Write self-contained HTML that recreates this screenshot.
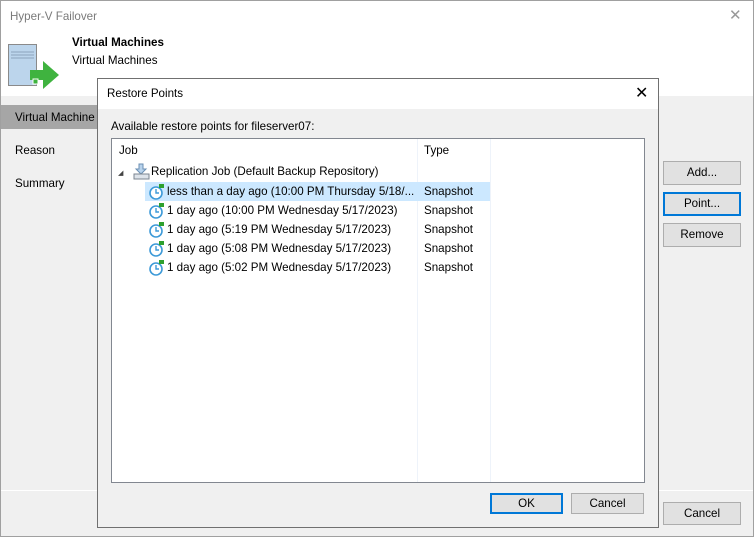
<!DOCTYPE html>
<html><head><meta charset="utf-8"><style>
*{box-sizing:border-box;margin:0;padding:0}
body{width:754px;height:537px;overflow:hidden;font-family:"Liberation Sans",sans-serif;font-size:11.6px;color:#000;background:#fff}
.win{position:absolute;left:0;top:0;width:754px;height:537px;border:1px solid #a0a0a0;background:#f0f0f0}
.abs{position:absolute}
.btn{position:absolute;background:#e1e1e1;border:1px solid #adadad;text-align:center}
.btn.def{border:2px solid #0078d7}
.row{position:absolute;left:145px;height:19px;line-height:19px;width:345px}
.row span{position:absolute;left:22px;width:252px;overflow:hidden;white-space:nowrap}
.row b{position:absolute;left:279px;font-weight:normal}
.ic{position:absolute;left:3px;top:2px}
</style></head><body>
<div class="win">
 <div class="abs" style="left:0;top:0;width:752px;height:95px;background:#fff"></div>
 <div class="abs" style="left:9px;top:9px;color:#7a7a7a">Hyper-V Failover</div>
 <div class="abs" style="left:728px;top:5px;color:#999;font-size:15px">✕</div>
 <svg class="abs" style="left:6px;top:42px" width="56" height="48">
  <rect x="1.5" y="1.5" width="28" height="41" fill="#bcd5ec" stroke="#8a8a8a"/>
  <line x1="4" y1="9" x2="27" y2="9" stroke="#8da4bc"/><line x1="4" y1="12" x2="27" y2="12" stroke="#8da4bc"/><line x1="4" y1="15" x2="27" y2="15" stroke="#8da4bc"/>
  <polygon points="23,27 36,27 36,18 52,32 36,46 36,37 23,37" fill="#3fb33f"/>
  <rect x="26" y="36" width="5" height="5" fill="#3fb33f" stroke="#fff"/>
 </svg>
 <div class="abs" style="left:71px;top:35px;font-weight:bold">Virtual Machines</div>
 <div class="abs" style="left:71px;top:53px">Virtual Machines</div>
 <div class="abs" style="left:0;top:104px;width:97px;height:24px;background:#a6a6a6"></div>
 <div class="abs" style="left:14px;top:110px">Virtual Machine</div>
 <div class="abs" style="left:14px;top:143px">Reason</div>
 <div class="abs" style="left:14px;top:176px">Summary</div>
 <div class="btn" style="left:662px;top:160px;width:78px;height:24px;line-height:22px">Add...</div>
 <div class="btn def" style="left:662px;top:191px;width:78px;height:24px;line-height:20px">Point...</div>
 <div class="btn" style="left:662px;top:222px;width:78px;height:24px;line-height:22px">Remove</div>
 <div class="abs" style="left:0;top:489px;width:752px;height:1px;background:#fff"></div>
 <div class="btn" style="left:662px;top:501px;width:78px;height:23px;line-height:21px">Cancel</div>
</div>
<div class="abs" style="left:97px;top:78px;width:562px;height:450px;border:1px solid #707070;background:#f0f0f0">
 <div class="abs" style="left:0;top:0;width:560px;height:30px;background:#fff"></div>
 <div class="abs" style="left:9px;top:8px">Restore Points</div>
 <div class="abs" style="left:537px;top:4px;font-size:16px">✕</div>
 <div class="abs" style="left:13px;top:41px">Available restore points for fileserver07:</div>
 <div class="abs" style="left:13px;top:59px;width:534px;height:345px;border:1px solid #828790;background:#fff">
  <div class="abs" style="left:305px;top:0;width:1px;height:343px;background:#eef3fa"></div>
  <div class="abs" style="left:378px;top:0;width:1px;height:343px;background:#eef3fa"></div>
 </div>
</div>
<div class="abs" style="left:119px;top:144px">Job</div>
<div class="abs" style="left:424px;top:144px">Type</div>
<div class="abs" style="left:118px;top:169px;font-size:7px;color:#444">◢</div>
<svg class="abs" style="left:133px;top:163px" width="17" height="17"><path d="M6 1h4v5h3l-5 5-5-5h3z" fill="#b8d3ec" stroke="#6b8fb3"/><rect x="1" y="11" width="15" height="5" fill="#dde3ea" stroke="#7b8590"/></svg>
<div class="abs" style="left:151px;top:165px">Replication Job (Default Backup Repository)</div>
<div class="abs" style="left:145px;top:182px;width:345px;height:19px;background:#cce8ff"></div>
<div class="row" style="top:182px"><svg class="ic" width="18" height="16"><circle cx="8" cy="9" r="6" fill="#fff" stroke="#3d9ad8" stroke-width="1.6"/><path d="M8 5v4h3" stroke="#3d9ad8" fill="none" stroke-width="1.4"/><rect x="11" y="0" width="5" height="4" fill="#2ea02e"/></svg><span>less than a day ago (10:00 PM Thursday 5/18/...</span><b>Snapshot</b></div>
<div class="row" style="top:201px"><svg class="ic" width="18" height="16"><circle cx="8" cy="9" r="6" fill="#fff" stroke="#3d9ad8" stroke-width="1.6"/><path d="M8 5v4h3" stroke="#3d9ad8" fill="none" stroke-width="1.4"/><rect x="11" y="0" width="5" height="4" fill="#2ea02e"/></svg><span>1 day ago (10:00 PM Wednesday 5/17/2023)</span><b>Snapshot</b></div>
<div class="row" style="top:220px"><svg class="ic" width="18" height="16"><circle cx="8" cy="9" r="6" fill="#fff" stroke="#3d9ad8" stroke-width="1.6"/><path d="M8 5v4h3" stroke="#3d9ad8" fill="none" stroke-width="1.4"/><rect x="11" y="0" width="5" height="4" fill="#2ea02e"/></svg><span>1 day ago (5:19 PM Wednesday 5/17/2023)</span><b>Snapshot</b></div>
<div class="row" style="top:239px"><svg class="ic" width="18" height="16"><circle cx="8" cy="9" r="6" fill="#fff" stroke="#3d9ad8" stroke-width="1.6"/><path d="M8 5v4h3" stroke="#3d9ad8" fill="none" stroke-width="1.4"/><rect x="11" y="0" width="5" height="4" fill="#2ea02e"/></svg><span>1 day ago (5:08 PM Wednesday 5/17/2023)</span><b>Snapshot</b></div>
<div class="row" style="top:258px"><svg class="ic" width="18" height="16"><circle cx="8" cy="9" r="6" fill="#fff" stroke="#3d9ad8" stroke-width="1.6"/><path d="M8 5v4h3" stroke="#3d9ad8" fill="none" stroke-width="1.4"/><rect x="11" y="0" width="5" height="4" fill="#2ea02e"/></svg><span>1 day ago (5:02 PM Wednesday 5/17/2023)</span><b>Snapshot</b></div>
<div class="btn def" style="left:490px;top:493px;width:73px;height:21px;line-height:17px">OK</div>
<div class="btn" style="left:571px;top:493px;width:73px;height:21px;line-height:19px">Cancel</div>
</body></html>
